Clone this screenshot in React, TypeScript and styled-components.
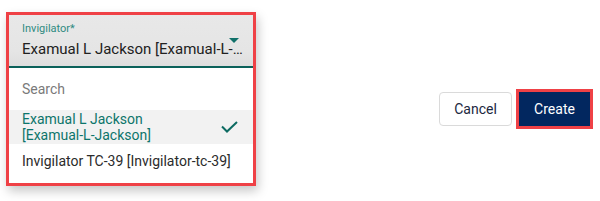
import React from "react";
import styled, { createGlobalStyle } from "styled-components";

const Global = createGlobalStyle`
  html, body { margin: 0; padding: 0; background: #ffffff; }
  body { font-family: Roboto, "Liberation Sans", Arial, sans-serif; }
  * { box-sizing: border-box; }
`;

const Page = styled.div`
  display: flex;
  justify-content: space-between;
  align-items: flex-start;
  height: 201px;
  padding: 12px 7px 0 6px;
`;

const Highlight = styled.div<{ $shadow?: boolean }>`
  border: 3px solid #ef4146;
  background: #ffffff;
  box-shadow: ${(p) => (p.$shadow ? "2px 5px 10px rgba(0,0,0,0.22)" : "none")};
`;

const SelectBox = styled(Highlight)`
  width: 250px;
  display: flex;
  flex-direction: column;
`;

const Field = styled.div`
  display: grid;
  grid-template-columns: 1fr 10px;
  padding: 7px 14px 8px 13px;
  background: linear-gradient(#e8e8e8, #e5e5e5 70%, #dedede);
  border-bottom: 2px solid #0b615a;
`;

const Label = styled.div`
  grid-column: 1;
  grid-row: 1;
  font-size: 11px;
  line-height: 13px;
  color: #2f8b82;
  margin-bottom: 5px;
`;

const Value = styled.div`
  grid-column: 1 / span 2;
  grid-row: 2;
  margin-right: -5px;
  font-size: 15px;
  line-height: 18px;
  color: #212121;
  white-space: nowrap;
  overflow: hidden;
  text-overflow: ellipsis;
`;

const Arrow = styled.svg`
  grid-column: 2;
  grid-row: 1 / span 2;
  align-self: start;
  margin-top: 16px;
  display: block;
`;

const Menu = styled.div`
  display: flex;
  flex-direction: column;
  padding-bottom: 6px;
  background: #ffffff;
`;

const Search = styled.div`
  padding: 13px 13px;
  font-size: 14px;
  line-height: 16px;
  color: #7a7a7a;
`;

const Option = styled.div<{ $selected?: boolean }>`
  display: flex;
  align-items: center;
  justify-content: space-between;
  gap: 8px;
  padding: ${(p) => (p.$selected ? "1px 15px 1px 13px" : "9px 15px 8px 13px")};
  background: ${(p) => (p.$selected ? "#f2f2f2" : "#ffffff")};
  color: ${(p) => (p.$selected ? "#0d756b" : "#2b2b2b")};
  font-size: 14px;
  line-height: 16px;
`;

const OptionText = styled.span<{ $narrow?: boolean }>`
  max-width: ${(p) => (p.$narrow ? "160px" : "none")};
`;

const Actions = styled.div`
  display: flex;
  align-items: center;
  gap: 4px;
  margin-top: 77px;
`;

const CancelButton = styled.button`
  width: 73px;
  height: 34px;
  border: 1px solid #dadada;
  border-radius: 4px;
  background: #ffffff;
  color: #1b2740;
  font-family: Roboto, "Liberation Sans", Arial, sans-serif;
  font-size: 14px;
  padding: 0;
`;

const CreateButton = styled.button`
  display: block;
  width: 71px;
  height: 34px;
  border: none;
  background: #02275f;
  color: #ffffff;
  font-family: Roboto, "Liberation Sans", Arial, sans-serif;
  font-size: 14px;
  padding: 0;
`;

export default function App() {
  return (
    <>
      <Global />
      <Page>
        <SelectBox $shadow>
          <Field>
            <Label>Invigilator*</Label>
            <Value>Examual L Jackson [Examual-L-Jackson]</Value>
            <Arrow width="10" height="5" viewBox="0 0 10 5">
              <polygon points="0,0 10,0 5,5" fill="#11716a" />
            </Arrow>
          </Field>
          <Menu>
            <Search>Search</Search>
            <Option $selected>
              <OptionText $narrow>Examual L Jackson [Examual-L-Jackson]</OptionText>
              <svg width="17" height="12" viewBox="0 0 17 12">
                <polyline
                  points="1,5.5 6,10.5 16,1"
                  fill="none"
                  stroke="#0d6b62"
                  strokeWidth="2"
                />
              </svg>
            </Option>
            <Option>
              <OptionText>Invigilator TC-39 [Invigilator-tc-39]</OptionText>
            </Option>
          </Menu>
        </SelectBox>
        <Actions>
          <CancelButton>Cancel</CancelButton>
          <Highlight>
            <CreateButton>Create</CreateButton>
          </Highlight>
        </Actions>
      </Page>
    </>
  );
}
